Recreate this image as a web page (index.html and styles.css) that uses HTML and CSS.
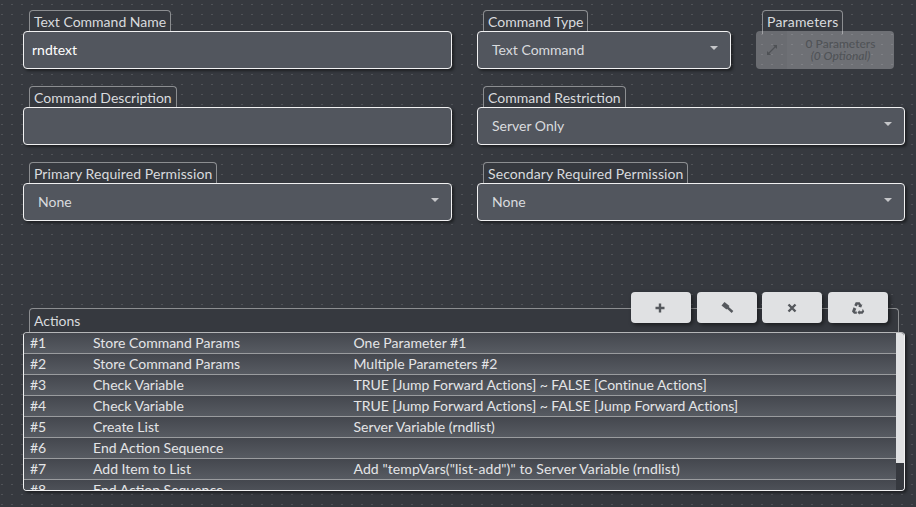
FILE: index.html
```html
<!DOCTYPE html>
<html lang="en">
<head>
    <meta charset="UTF-8">
    <title>Text Command</title>
    <link rel="stylesheet" href="styles.css">
</head>
<body>
    <div class="form">
        <div class="field">
            <span class="tab">Text Command Name</span>
            <div class="input">rndtext</div>
        </div>
        <div class="pair">
            <div class="field">
                <span class="tab">Command Type</span>
                <div class="input select">Text Command</div>
            </div>
            <div class="field">
                <span class="tab wider">Parameters</span>
                <div class="params">
                    <span class="params-icon">
                        <svg width="12" height="12" viewBox="0 0 12 12"><path d="M2.500 9.500 9.500 2.500" stroke="#4e5155" stroke-width="1.200"/><path d="M7 1h4v4zM1 7v4h4z" fill="#4e5155"/></svg>
                    </span>
                    <span class="params-text">0 Parameters<i>(0 Optional)</i></span>
                </div>
            </div>
        </div>
        <div class="field">
            <span class="tab">Command Description</span>
            <div class="input"></div>
        </div>
        <div class="field">
            <span class="tab">Command Restriction</span>
            <div class="input select">Server Only</div>
        </div>
        <div class="field">
            <span class="tab wide">Primary Required Permission</span>
            <div class="input select">None</div>
        </div>
        <div class="field">
            <span class="tab wide">Secondary Required Permission</span>
            <div class="input select">None</div>
        </div>
    </div>

    <div class="actions">
        <div class="actions-tab">Actions</div>
        <div class="toolbar">
            <button class="tool"><svg width="12" height="12" viewBox="0 0 12 12"><path d="M5 1.500v9M.5 6h9" stroke="#55585d" stroke-width="2.400" fill="none"/></svg></button>
            <button class="tool"><svg width="14" height="14" viewBox="0 0 14 14"><path d="M4.500 1 9.500 5 6.500 8.500 1.500 4.500z" fill="#55585d"/><path d="M7.500 6.500 12.500 11" stroke="#55585d" stroke-width="2.400"/></svg></button>
            <button class="tool"><svg width="12" height="12" viewBox="0 0 12 12"><path d="M2.500 2.500 9.500 9.500M9.500 2.500 2.500 9.500" stroke="#55585d" stroke-width="2.400" fill="none"/></svg></button>
            <button class="tool"><svg width="14" height="14" viewBox="0 0 14 14"><path d="M4.700 1.200H8.700L10.300 3.800 11.400 3.200 10.300 6.600 7 5.800 8.100 5.200 7 3.300 5.600 5.600 3.300 4.300zM2.600 6.200 5.300 7.800 4 10.400H5.800V12.800H3L1 10.500zM11.800 7.800 13.200 10.400 11.600 12.800H8.500V13.800L6.500 11.400 8.500 9V10.300H11z" fill="#55585d"/></svg></button>
        </div>
        <div class="list">
            <div class="rows">
                <div class="row"><span class="num">#1</span><span class="name">Store Command Params</span><span>One Parameter #1</span></div>
                <div class="row"><span class="num">#2</span><span class="name">Store Command Params</span><span>Multiple Parameters #2</span></div>
                <div class="row"><span class="num">#3</span><span class="name">Check Variable</span><span class="tight">TRUE [Jump Forward Actions] ~ FALSE [Continue Actions]</span></div>
                <div class="row"><span class="num">#4</span><span class="name">Check Variable</span><span class="tight">TRUE [Jump Forward Actions] ~ FALSE [Jump Forward Actions]</span></div>
                <div class="row"><span class="num">#5</span><span class="name">Create List</span><span>Server Variable (rndlist)</span></div>
                <div class="row"><span class="num">#6</span><span class="name">End Action Sequence</span><span></span></div>
                <div class="row"><span class="num">#7</span><span class="name">Add Item to List</span><span class="wide">Add "tempVars("list-add")" to Server Variable (rndlist)</span></div>
                <div class="row"><span class="num">#8</span><span class="name">End Action Sequence</span><span></span></div>
            </div>
            <div class="scrollbar"><div class="thumb"></div></div>
        </div>
    </div>
</body>
</html>
```

FILE: styles.css
```css
* {
    box-sizing: border-box;
}
body {
    margin: 0;
    height: 507px;
    overflow: hidden;
    padding: 10px 11px 0 23px;
    font-family: Lato, "Noto Sans", sans-serif;
    font-size: 14px;
    color: #d9dbde;
    /* dot grid: first layer hides all but 2px of each 10px of the stripes */
    background-color: #36393f;
    background-image:
        linear-gradient(90deg, #36393f 1px, transparent 1px, transparent 3px, #36393f 3px),
        linear-gradient(#36393f 4px, #505358 4px, #505358 5px, #36393f 5px);
    background-size: 10px 10px;
}
.wide {
    letter-spacing: .1px;
}
.wider {
    letter-spacing: .2px;
}
.tight {
    letter-spacing: -.04px;
}

.form {
    display: grid;
    grid-template-columns: 429px 428px;
    column-gap: 25px;
    row-gap: 17px;
}
.pair {
    display: flex;
    gap: 25px;
}
.pair .field:first-child {
    width: 254px;
}
.pair .field:last-child {
    width: 138px;
}

.tab {
    display: table;
    height: 24px;
    margin: 0 0 -3px 6px;
    padding: 0 4px;
    line-height: 21px;
    background: #36393f;
    border: 1px solid #8c8e91;
    border-bottom: 0;
    border-radius: 4px 4px 0 0;
}
.input {
    position: relative;
    height: 38px;
    padding: 0 8px;
    line-height: 36px;
    color: #fff;
    background: #52565e;
    border: 1px solid #f1f1f2;
    border-radius: 4px;
    box-shadow: 2px 2px 3px rgba(0, 0, 0, .45);
}
.select {
    padding-left: 14px;
    color: #d9dbde;
}
.select::after {
    content: "";
    position: absolute;
    top: 14px;
    right: 12px;
    border: 4px solid transparent;
    border-top: 4px solid #c5c6c9;
    border-bottom: 0;
}

.params {
    position: relative;
    display: flex;
    height: 38px;
    background: rgba(224, 225, 227, .33);
    border-radius: 4px;
}
.params-icon {
    display: flex;
    align-items: center;
    justify-content: center;
    width: 31px;
    background: rgba(0, 0, 0, .03);
    border-radius: 4px 0 0 4px;
}
.params-text {
    flex: 1;
    padding-top: 7px;
    font-size: 12px;
    line-height: 12px;
    text-align: center;
    color: #505357;
    font-weight: 500;
}
.params-text i {
    display: block;
}

.actions {
    position: relative;
    margin-top: 87px;
}
.actions-tab {
    height: 28px;
    margin: 0 6px -4px;
    padding: 0 4px;
    line-height: 24px;
    background: #36393f;
    border: 1px solid #8c8e91;
    border-bottom: 0;
    border-radius: 4px 4px 0 0;
}
.toolbar {
    position: absolute;
    top: -16px;
    left: 608px;
    display: flex;
    gap: 5.67px;
}
.tool {
    display: flex;
    align-items: center;
    justify-content: center;
    width: 60px;
    height: 31px;
    padding: 0;
    background: #e0e1e3;
    border: 0;
    border-radius: 4px;
    box-shadow: 2px 2px 4px rgba(0, 0, 0, .5);
}

.list {
    position: relative;
    display: flex;
    height: 159px;
    overflow: hidden;
    border: 1px solid #f1f1f2;
    border-top-color: #b5b6b8;
    border-radius: 4px;
    box-shadow: 2px 2px 3px rgba(0, 0, 0, .45);
}
.rows {
    flex: 1;
    overflow: hidden;
}
.row {
    display: flex;
    height: 21px;
    line-height: 20px;
    padding-left: 6px;
    color: #e4e5e7;
    background: linear-gradient(#44474e, #575b62);
    border-bottom: 1px solid #9a9c9f;
}
.num {
    width: 63px;
}
.name {
    width: 260.5px;
}
.scrollbar {
    width: 8px;
    background: #36393f;
}
.thumb {
    height: 130px;
    background: #e0e1e3;
}
```
